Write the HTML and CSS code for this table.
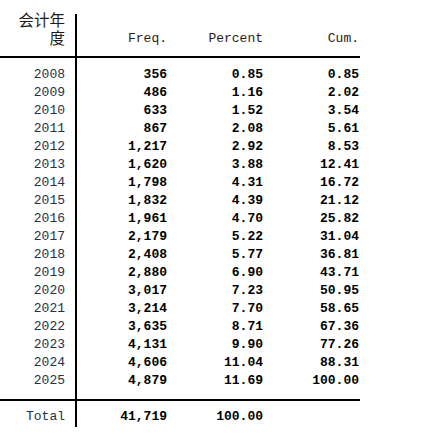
FILE: index.html
```html
<!DOCTYPE html>
<html lang="zh-CN">
<head>
  <meta charset="UTF-8">
  <title>tabulate 会计年度</title>
  <link rel="stylesheet" href="styles.css">
</head>
<body>

  <div class="tab">
    <div class="row head">
      <div class="label">会计年<br>度</div>
      <div class="col">Freq.</div>
      <div class="col">Percent</div>
      <div class="col last">Cum.</div>
    </div>

    <div class="body" id="rows"></div>

    <div class="foot">
      <div class="row">
        <div class="label">Total</div>
        <div class="num">41,719</div>
        <div class="num">100.00</div>
        <div class="num last"></div>
      </div>
    </div>
  </div>

  <script>
    const data = [
      ['2008', '356', '0.85', '0.85'],
      ['2009', '486', '1.16', '2.02'],
      ['2010', '633', '1.52', '3.54'],
      ['2011', '867', '2.08', '5.61'],
      ['2012', '1,217', '2.92', '8.53'],
      ['2013', '1,620', '3.88', '12.41'],
      ['2014', '1,798', '4.31', '16.72'],
      ['2015', '1,832', '4.39', '21.12'],
      ['2016', '1,961', '4.70', '25.82'],
      ['2017', '2,179', '5.22', '31.04'],
      ['2018', '2,408', '5.77', '36.81'],
      ['2019', '2,880', '6.90', '43.71'],
      ['2020', '3,017', '7.23', '50.95'],
      ['2021', '3,214', '7.70', '58.65'],
      ['2022', '3,635', '8.71', '67.36'],
      ['2023', '4,131', '9.90', '77.26'],
      ['2024', '4,606', '11.04', '88.31'],
      ['2025', '4,879', '11.69', '100.00']
    ];

    const rows = document.getElementById('rows');

    // one row per year
    data.forEach(d => {
      const row = document.createElement('div');
      row.className = 'row';
      row.innerHTML =
        '<div class="label">' + d[0] + '</div>' +
        '<div class="num">' + d[1] + '</div>' +
        '<div class="num">' + d[2] + '</div>' +
        '<div class="num last">' + d[3] + '</div>';
      rows.appendChild(row);
    });
  </script>
</body>
</html>
```

FILE: styles.css
```css
body {
  margin: 0;
  padding-top: 14px;
  background-color: #fff;
  font-family: "Liberation Mono", "Noto Sans CJK SC", monospace;
  font-size: 13px;
  color: #1c1c1c;
}

.tab {
  width: 360px;
}

.row {
  display: grid;
  grid-template-columns: 77px 90px 96px 97px;
  line-height: 18px;
}

.label {
  box-sizing: border-box;
  padding-right: 12px;
  text-align: right;
  color: #26304a;
}

.col, .num {
  text-align: right;
  white-space: pre;
}

.num {
  font-weight: bold;
  color: #000;
}

.last {
  padding-right: 1px;
}

/* vertical rule between the label column and the numbers */
.head, .body, .foot {
  background: linear-gradient(#000, #000) 75px 0 / 2px 100% no-repeat;
}

.head {
  height: 42px;
  line-height: 18px;
}

.head .label {
  font-size: 15.5px;
  margin-top: -1px;
  color: #1c1c1c;
}

.head .col {
  align-self: end;
  padding-bottom: 8px;
  color: #2a1a1a;
}

.body {
  border-top: 2px solid #000;
  padding-top: 8px;
  padding-bottom: 9px;
}

.foot {
  border-top: 2px solid #000;
  padding-top: 7px;
  padding-bottom: 1px;
}
```
